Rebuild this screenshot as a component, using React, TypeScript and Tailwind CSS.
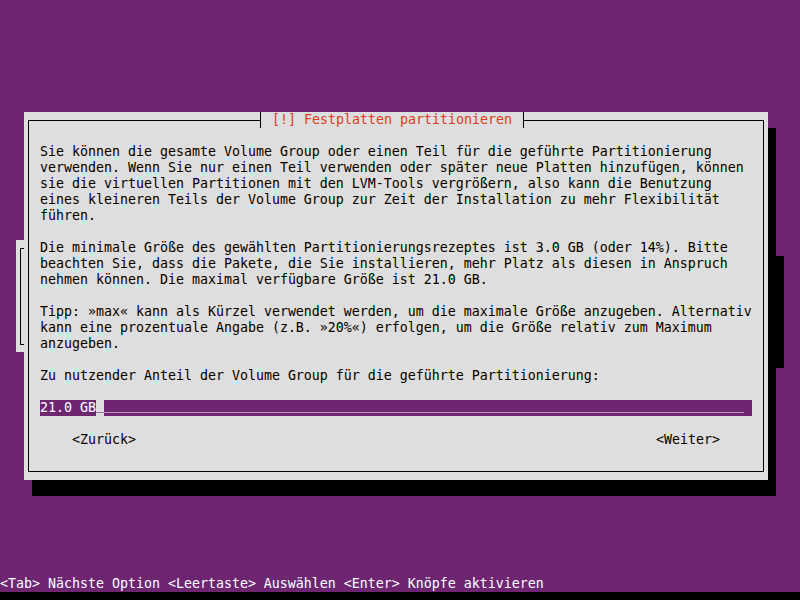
import React from "react";

const mono = "font-['DejaVu_Sans_Mono','Liberation_Mono',monospace] text-[13.29px] leading-4";

const intro = [
  "Sie können die gesamte Volume Group oder einen Teil für die geführte Partitionierung",
  "verwenden. Wenn Sie nur einen Teil verwenden oder später neue Platten hinzufügen, können",
  "sie die virtuellen Partitionen mit den LVM-Tools vergrößern, also kann die Benutzung",
  "eines kleineren Teils der Volume Group zur Zeit der Installation zu mehr Flexibilität",
  "führen.",
];

const sizes = [
  "Die minimale Größe des gewählten Partitionierungsrezeptes ist 3.0 GB (oder 14%). Bitte",
  "beachten Sie, dass die Pakete, die Sie installieren, mehr Platz als diesen in Anspruch",
  "nehmen können. Die maximal verfügbare Größe ist 21.0 GB.",
];

const tip = [
  "Tipp: »max« kann als Kürzel verwendet werden, um die maximale Größe anzugeben. Alternativ",
  "kann eine prozentuale Angabe (z.B. »20%«) erfolgen, um die Größe relativ zum Maximum",
  "anzugeben.",
];

function Lines({ lines }: { lines: string[] }) {
  return (
    <div className="mb-4">
      {lines.map((l, i) => (
        <div key={i} className="h-4 whitespace-pre">
          {l}
        </div>
      ))}
    </div>
  );
}

export default function App() {
  return (
    <div className={`relative flex h-[600px] w-[800px] flex-col overflow-hidden bg-[#6f2671] ${mono}`}>
      {/* dialog left behind the current one */}
      <div className="absolute left-4 top-[240px] h-[112px] w-[760px] bg-[#dedede] shadow-[8px_16px_0_0_#000]">
        <div className="ml-1 mt-2 h-[97px] w-4 border-b border-l border-t border-black" />
      </div>

      {/* main dialog */}
      <div className="relative ml-6 mt-[112px] flex h-[368px] w-[744px] flex-col bg-[#dedede] px-1 pb-2 text-black shadow-[8px_16px_0_0_#000]">
        <div className="flex h-4">
          <div className="mt-2 w-[232px] border-l border-t border-black" />
          <div className="border-l border-r border-black pl-[3px] pr-[3px] whitespace-pre text-[#dd3b26]">
            {" [!] Festplatten partitionieren "}
          </div>
          <div className="mt-2 flex-1 border-r border-t border-black" />
        </div>

        <div className="flex flex-1 flex-col border-b border-l border-r border-black pl-[11px] pr-[11px] pt-4">
          <Lines lines={intro} />
          <Lines lines={sizes} />
          <Lines lines={tip} />
          <div className="mb-4 h-4 whitespace-pre">
            Zu nutzender Anteil der Volume Group für die geführte Partitionierung:
          </div>

          {/* input field */}
          <div className="mb-4 flex h-4 w-[712px] items-start bg-[#6f2671] whitespace-pre">
            <span className="text-white">21.0 GB</span>
            <span className="h-4 bg-[#dedede] leading-[10px] text-[#6f2671]">_</span>
            <span className="leading-[10px] text-[#dedede]">{"_".repeat(80)}</span>
          </div>

          <div className="flex h-4 justify-between px-8 whitespace-pre">
            <span>{"<Zurück>"}</span>
            <span>{"<Weiter>"}</span>
          </div>
        </div>
      </div>

      {/* key help line */}
      <div className="mt-auto h-4 whitespace-pre text-white">
        {"<Tab> Nächste Option <Leertaste> Auswählen <Enter> Knöpfe aktivieren"}
      </div>
      <div className="h-2 bg-black" />
    </div>
  );
}
